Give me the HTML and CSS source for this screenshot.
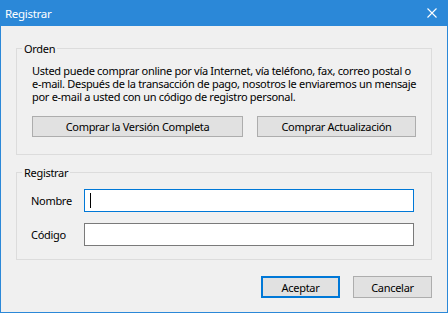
FILE: index.html
```html
<!DOCTYPE html>
<html lang="es">
<head>
    <meta charset="UTF-8">
    <title>Registrar</title>
    <link rel="stylesheet" href="styles.css">
</head>
<body>
    <div class="window">
        <div class="titlebar">
            <span class="title">Registrar</span>
            <svg class="close" width="10" height="10" viewBox="0 0 10 10">
                <path d="M0.5 0.5 L9.5 9.5 M9.5 0.5 L0.5 9.5" stroke="#fff" stroke-width="1.1" fill="none"/>
            </svg>
        </div>
        <div class="content">
            <fieldset class="group">
                <legend>Orden</legend>
                <p class="info">Usted puede comprar online por vía Internet, vía teléfono, fax, correo postal o <span class="nw">e-mail.</span> Después de la transacción de pago, nosotros le enviaremos un mensaje por <span class="nw">e-mail</span> a usted con un código de registro personal.</p>
                <div class="buy-row">
                    <button class="btn btn-full">Comprar la Versión Completa</button>
                    <button class="btn btn-update">Comprar Actualización</button>
                </div>
            </fieldset>
            <fieldset class="group group-reg">
                <legend>Registrar</legend>
                <div class="row">
                    <label>Nombre</label>
                    <div class="field focused"><span class="caret"></span></div>
                </div>
                <div class="row">
                    <label>Código</label>
                    <div class="field"></div>
                </div>
            </fieldset>
            <div class="actions">
                <button class="btn btn-default">Aceptar</button>
                <button class="btn">Cancelar</button>
            </div>
        </div>
    </div>
</body>
</html>
```

FILE: styles.css
```css
* {
    box-sizing: border-box;
}

body {
    margin: 0;
    font-family: "Noto Sans", "DejaVu Sans", sans-serif;
    font-size: 11px;
    letter-spacing: -0.3px;
    color: #000;
}

.window {
    width: 448px;
    height: 313px;
    border: 1px solid #2b88d8;
    border-top: none;
    background-color: #f0f0f0;
}

.titlebar {
    height: 26px;
    margin: 0 -1px;
    background-color: #2b88d8;
    color: #fff;
    display: flex;
    align-items: center;
    justify-content: space-between;
    padding: 0 11px 0 5px;
}

.title {
    font-size: 11.5px;
}

.content {
    padding: 15px 15px 0 15px;
}

.group {
    margin: 0;
    padding: 0 15px 17px 15px;
    border: 1px solid #dcdcdc;
    width: 416px;
}

.group legend {
    margin-left: -10px;
    padding: 0 2px;
    line-height: 15px;
}

.info {
    margin: 8px -10px 13px 0;
    line-height: 13px;
}

.nw {
    white-space: nowrap;
}

.buy-row {
    display: flex;
    justify-content: space-between;
}

.btn {
    font-family: inherit;
    font-size: 11px;
    letter-spacing: -0.3px;
    height: 21px;
    padding: 0;
    background-color: #e1e1e1;
    border: 1px solid #adadad;
    color: #000;
}

.btn-full {
    width: 211px;
}

.btn-update {
    width: 159px;
}

.group-reg {
    margin-top: 10px;
    padding-bottom: 13px;
}

.row {
    display: flex;
    align-items: center;
    margin-top: 11px;
}

.group-reg legend + .row {
    margin-top: 9px;
}

.row label {
    width: 53px;
    margin-left: -1px;
}

.field {
    width: 330px;
    height: 23px;
    background-color: #fff;
    border: 1px solid #7a7a7a;
    display: flex;
    align-items: center;
}

.field.focused {
    border-color: #0078d7;
}

.caret {
    width: 1px;
    height: 15px;
    margin-left: 5px;
    background-color: #000;
}

.actions {
    display: flex;
    justify-content: flex-end;
    gap: 13px;
    margin-top: 16px;
}

.actions .btn {
    width: 79px;
    height: 22px;
}

.actions .btn-default {
    border: 2px solid #0078d7;
}
```
